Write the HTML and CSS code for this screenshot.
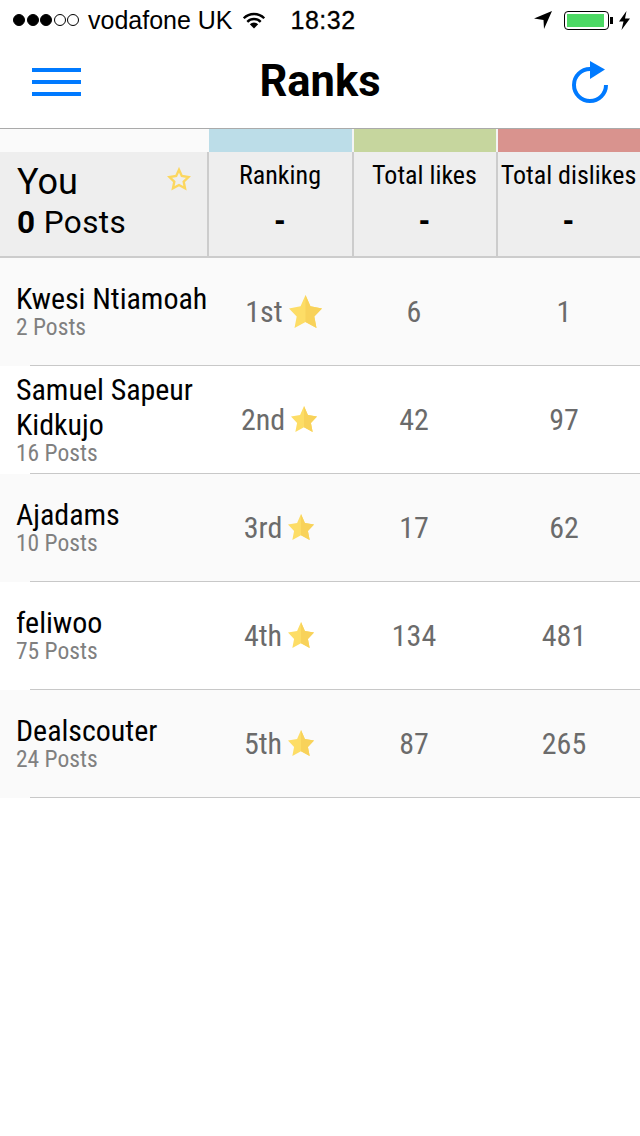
FILE: index.html
```html
<!DOCTYPE html>
<html lang="en">
<head>
<meta charset="utf-8">
<title>Ranks</title>
<link rel="stylesheet" href="styles.css">
</head>
<body>
<div class="status">
  <div class="signal"><i class="dot on"></i><i class="dot on"></i><i class="dot on"></i><i class="dot"></i><i class="dot"></i></div>
  <span class="carrier">vodafone UK</span>
  <svg class="wifi" width="24" height="18" viewBox="0 0 24 18"><path d="M1.75 7.25 A14.5 14.5 0 0 1 22.25 7.25 M5.3 10.8 A9.5 9.5 0 0 1 18.7 10.8" fill="none" stroke="#000" stroke-width="2.4"/><path d="M12 17.5 L7.8 13.3 A6 6 0 0 1 16.2 13.3 Z" fill="#000"/></svg>
  <span class="time">18:32</span>
  <div class="status-right">
    <svg class="loc" width="18" height="18" viewBox="0 0 18 18"><path d="M18 0 L0 7.5 L9.5 9 L10 18 Z" fill="#000"/></svg>
    <div class="battery"><div class="level"></div></div>
    <div class="nub"></div>
    <svg class="bolt" width="11" height="19" viewBox="0 0 11 19"><path d="M7.5 0 L0 10.5 L4.5 10.5 L2.5 19 L11 7.5 L6 7.5 Z" fill="#000"/></svg>
  </div>
</div>
<header class="nav">
  <div class="burger"><span></span><span></span><span></span></div>
  <h1>Ranks</h1>
  <svg class="refresh" width="36" height="42" viewBox="0 0 36 42"><path d="M18 8 A16 16 0 1 0 34 24" fill="none" stroke="#007aff" stroke-width="4"/><path d="M18 0 L33 8.5 L18 18 Z" fill="#007aff"/></svg>
</header>
<section class="board">
  <div class="strips">
    <div class="strip strip-you"></div><div class="strip strip-rank"></div><div class="strip strip-likes"></div><div class="strip strip-dislikes"></div>
  </div>
  <div class="you-row">
    <div class="you">
      <div class="you-name">You</div>
      <div class="you-posts"><b>0</b> Posts</div>
      <svg class="you-star" width="24" height="24" viewBox="0 0 24 24"><path d="M12 2.8 L14.8 9 L21.5 10 L16.7 14.7 L18 21.3 L12 18 L6 21.3 L7.3 14.7 L2.5 10 L9.2 9 Z" fill="none" stroke="#fcd75f" stroke-width="2.4"/></svg>
    </div>
    <div class="stat"><div class="stat-label">Ranking</div><div class="stat-value">-</div></div>
    <div class="stat"><div class="stat-label">Total likes</div><div class="stat-value">-</div></div>
    <div class="stat"><div class="stat-label">Total dislikes</div><div class="stat-value">-</div></div>
  </div>

  <div class="row">
    <div class="who"><div class="name">Kwesi Ntiamoah</div><div class="posts">2 Posts</div></div>
    <div class="rank rank-first"><span>1st</span><svg class="star star-lg" viewBox="0 0 24 24"><path d="M12 0 L15.6 8.2 L24 9.8 L18.4 15.6 L20 24 L12 19.6 L4 24 L5.6 15.6 L0 9.8 L8.4 8.2 Z" fill="#fddd66"/><path d="M12 0 L15.6 8.2 L24 9.8 L18.4 15.6 L20 24 L12 19.6 Z" fill="#f8d25a"/></svg></div>
    <div class="num">6</div><div class="num">1</div>
  </div>
  <div class="row">
    <div class="who"><div class="name">Samuel Sapeur Kidkujo</div><div class="posts">16 Posts</div></div>
    <div class="rank"><span>2nd</span><svg class="star" viewBox="0 0 24 24"><path d="M12 0 L15.6 8.2 L24 9.8 L18.4 15.6 L20 24 L12 19.6 L4 24 L5.6 15.6 L0 9.8 L8.4 8.2 Z" fill="#fddd66"/><path d="M12 0 L15.6 8.2 L24 9.8 L18.4 15.6 L20 24 L12 19.6 Z" fill="#f8d25a"/></svg></div>
    <div class="num">42</div><div class="num">97</div>
  </div>
  <div class="row">
    <div class="who"><div class="name">Ajadams</div><div class="posts">10 Posts</div></div>
    <div class="rank"><span>3rd</span><svg class="star" viewBox="0 0 24 24"><path d="M12 0 L15.6 8.2 L24 9.8 L18.4 15.6 L20 24 L12 19.6 L4 24 L5.6 15.6 L0 9.8 L8.4 8.2 Z" fill="#fddd66"/><path d="M12 0 L15.6 8.2 L24 9.8 L18.4 15.6 L20 24 L12 19.6 Z" fill="#f8d25a"/></svg></div>
    <div class="num">17</div><div class="num">62</div>
  </div>
  <div class="row">
    <div class="who"><div class="name">feliwoo</div><div class="posts">75 Posts</div></div>
    <div class="rank"><span>4th</span><svg class="star" viewBox="0 0 24 24"><path d="M12 0 L15.6 8.2 L24 9.8 L18.4 15.6 L20 24 L12 19.6 L4 24 L5.6 15.6 L0 9.8 L8.4 8.2 Z" fill="#fddd66"/><path d="M12 0 L15.6 8.2 L24 9.8 L18.4 15.6 L20 24 L12 19.6 Z" fill="#f8d25a"/></svg></div>
    <div class="num">134</div><div class="num">481</div>
  </div>
  <div class="row">
    <div class="who"><div class="name">Dealscouter</div><div class="posts">24 Posts</div></div>
    <div class="rank"><span>5th</span><svg class="star" viewBox="0 0 24 24"><path d="M12 0 L15.6 8.2 L24 9.8 L18.4 15.6 L20 24 L12 19.6 L4 24 L5.6 15.6 L0 9.8 L8.4 8.2 Z" fill="#fddd66"/><path d="M12 0 L15.6 8.2 L24 9.8 L18.4 15.6 L20 24 L12 19.6 Z" fill="#f8d25a"/></svg></div>
    <div class="num">87</div><div class="num">265</div>
  </div>
</section>
</body>
</html>
```
FILE: styles.css
```css
* { box-sizing: border-box; }
html, body { margin: 0; padding: 0; background: #fff; }
body { width: 640px; height: 1136px; overflow: hidden; font-family: Roboto, sans-serif; font-stretch: 75%; color: #000; }

.status { height: 40px; display: flex; align-items: center; padding: 0 10px 0 13px; font-family: "Liberation Sans", Arial, sans-serif; font-stretch: normal; font-size: 25px; }
.signal { display: flex; gap: 1.5px; }
.dot { width: 12px; height: 12px; border-radius: 50%; border: 1px solid #000; }
.dot.on { background: #000; }
.carrier { margin-left: 9px; }
.wifi { margin-left: 9px; }
.time { margin-left: 25px; letter-spacing: .5px; -webkit-text-stroke: .3px #000; }
.status-right { margin-left: auto; display: flex; align-items: center; }
.loc { margin-right: 12px; }
.battery { width: 45px; height: 19px; border: 1px solid #000; border-radius: 4px; padding: 2px; }
.level { height: 100%; width: 37px; background: #4cd964; }
.nub { width: 3px; height: 7px; margin-left: 1px; background: #000; margin-right: 6px; }

.nav { height: 88px; position: relative; display: flex; align-items: center; justify-content: space-between; padding: 0 32px 4px 32px; }
.nav h1 { margin: 0; font-size: 43.5px; font-weight: 700; font-stretch: normal; line-height: 1; position: absolute; left: 0; right: 0; text-align: center; }
.burger { width: 49px; display: flex; flex-direction: column; gap: 8px; }
.burger span { height: 4px; background: #007aff; }

.board { border-top: 1px solid #aaa; }
.strips { display: grid; grid-template-columns: 209px 145px 144px 142px; height: 23px; }
.strip-you { background: #fafafa; }
.strip-rank { background: #bcdde8; border-right: 2px solid #f4f4f4; }
.strip-likes { background: #c6d69e; border-right: 2px solid #f4f4f4; }
.strip-dislikes { background: #d9938e; }

.you-row { display: grid; grid-template-columns: 209px 145px 144px 142px; height: 106px; background: #eee; border-bottom: 2px solid #ccc; }
.you { position: relative; padding: 9px 0 0 17px; border-right: 2px solid #ccc; font-stretch: normal; }
.you-name { font-size: 36px; line-height: 43px; }
.you-posts { font-size: 31.5px; line-height: 37px; letter-spacing: .4px; }
.you-star { position: absolute; top: 15px; right: 16px; }
.stat { text-align: center; border-right: 2px solid #ccc; padding-right: 1px; }
.stat:last-child { border-right: 0; }
.stat-label { font-size: 26px; line-height: 30px; margin-top: 8px; }
.stat-value { font-size: 34px; font-weight: 700; line-height: 40px; margin-top: 10px; }

.row { position: relative; display: grid; grid-template-columns: 208px 131px 150px 150px; height: 108px; align-items: center; padding-bottom: 2px; }
.row::after { content: ""; position: absolute; left: 30px; right: 0; bottom: 0; height: 1px; background: #c8c8c8; }
.row:nth-child(odd) { background: #fafafa; }
.who { padding: 0 0 2px 16px; align-self: stretch; display: flex; flex-direction: column; justify-content: center; }
.name { font-size: 30px; line-height: 35px; letter-spacing: -.03px; }
.posts { font-size: 23.5px; line-height: 23px; color: #808080; }
.rank { display: flex; justify-content: center; align-items: center; gap: 6px; padding-left: 11px; font-size: 30px; color: #6b6b6b; white-space: nowrap; }
.rank-first { padding-left: 20px; }
.star { width: 26px; height: 26px; flex: none; }
.star-lg { width: 33px; height: 33px; }
.num { text-align: center; font-size: 30px; color: #6b6b6b; }
```
